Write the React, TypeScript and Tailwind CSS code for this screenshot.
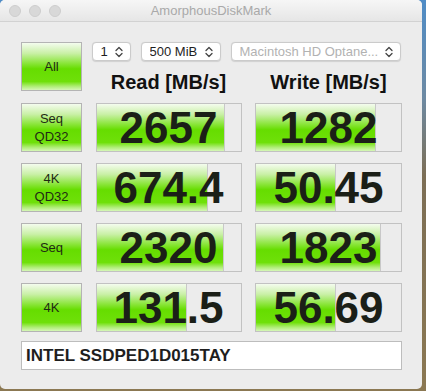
import React from 'react';

const font = { fontFamily: '"Liberation Sans", Arial, sans-serif' };

const rows = [
  { label: ['Seq', 'QD32'], read: '2657', readFill: 128, write: '1282', writeFill: 120 },
  { label: ['4K', 'QD32'], read: '674.4', readFill: 111, write: '50.45', writeFill: 80 },
  { label: ['Seq'], read: '2320', readFill: 127, write: '1823', writeFill: 125 },
  { label: ['4K'], read: '131.5', readFill: 90, write: '56.69', writeFill: 80 },
];

const green =
  'bg-[linear-gradient(to_bottom,#f4fcee_0%,#c9f0a6_22%,#8de63f_42%,#66dd00_55%,#6fe00a_82%,#aeed74_92%,#d6f7b8_100%)]';

const Chevrons = () => (
  <svg width="8" height="12" viewBox="0 0 8 12" fill="none" stroke="#444" strokeWidth="1.3" strokeLinecap="round" strokeLinejoin="round">
    <path d="M1 4.5 L4 1.5 L7 4.5" />
    <path d="M1 7.5 L4 10.5 L7 7.5" />
  </svg>
);

const Select = ({ text, w, muted }: { text: string; w: string; muted?: boolean }) => (
  <div
    className={`${w} h-[19px] flex items-center justify-between pl-[8px] pr-[7px] bg-white rounded-[4px] border border-[#cbcbcb] shadow-[0_0.5px_1px_rgba(0,0,0,0.12)] text-[13px] leading-none ${muted ? 'text-[#b2b2b2]' : 'text-[#1e1e1e]'}`}
  >
    <span className="truncate">{text}</span>
    <Chevrons />
  </div>
);

const GreenButton = ({ lines }: { lines: string[] }) => (
  <div className={`h-[49px] border border-[#b4b4b4] ${green} flex flex-col items-center justify-center text-[13px] leading-[18px] text-[#1f2a14]`}>
    {lines.map((l) => (
      <span key={l}>{l}</span>
    ))}
  </div>
);

const Cell = ({ value, fill }: { value: string; fill: number }) => (
  <div className="relative h-[49px] border border-[#c2c2c2] bg-[#ececec] flex items-center justify-center">
    <div className={`absolute left-0 top-0 bottom-0 ${green} border-r border-[#c8c8c8]`} style={{ width: fill }} />
    <span className="relative text-[44px] leading-none font-bold text-[#1b1f17]">{value}</span>
  </div>
);

export default function App() {
  return (
    <div className="w-[426px] h-[391px] bg-[linear-gradient(to_bottom,#4f8cc6_0%,#6d8aa3_25%,#7c6e55_45%,#8b7852_100%)]" style={font}>
      <div className="w-[422px] h-[389px] rounded-[5px] overflow-hidden bg-[#ececec] flex flex-col">
        <div className="relative h-[22px] shrink-0 bg-[linear-gradient(to_bottom,#f6f6f6,#e6e6e6)] border-b border-[#d2d2d2] flex items-center pl-[9px] gap-[8px]">
          <span className="w-[12px] h-[12px] rounded-full bg-[#d8d8d8] border border-[#cdcdcd]" />
          <span className="w-[12px] h-[12px] rounded-full bg-[#d8d8d8] border border-[#cdcdcd]" />
          <span className="w-[12px] h-[12px] rounded-full bg-[#d8d8d8] border border-[#cdcdcd]" />
          <span className="absolute inset-0 flex items-center justify-center text-[13px] text-[#a9a9a9]">AmorphousDiskMark</span>
        </div>

        <div className="pl-[21px] pt-[20px]">
          <div className="grid grid-cols-[61px_146px_147px] gap-x-[13.5px] gap-y-[11px]">
            <GreenButton lines={['All']} />
            <div className="col-span-2 -ml-[4px] flex flex-col">
              <div className="flex gap-[10px]">
                <Select text="1" w="w-[39px]" />
                <Select text="500 MiB" w="w-[80px]" />
                <Select text="Macintosh HD Optane..." w="w-[170px]" muted />
              </div>
              <div className="mt-[11px] ml-[4px] grid grid-cols-[146px_147px] gap-x-[13.5px] text-[20px] leading-[20px] font-bold text-[#111]">
                <span className="text-center">Read [MB/s]</span>
                <span className="text-center">Write [MB/s]</span>
              </div>
            </div>

            {rows.map((r) => (
              <React.Fragment key={r.read}>
                <GreenButton lines={r.label} />
                <Cell value={r.read} fill={r.readFill} />
                <Cell value={r.write} fill={r.writeFill} />
              </React.Fragment>
            ))}
          </div>

          <div className="mt-[9px] w-[381px] h-[29px] bg-white border border-[#bdbdbd] flex items-center pl-[4px] text-[17px] font-bold text-[#1e1e1e]">
            INTEL SSDPED1D015TAY
          </div>
        </div>
      </div>
    </div>
  );
}
